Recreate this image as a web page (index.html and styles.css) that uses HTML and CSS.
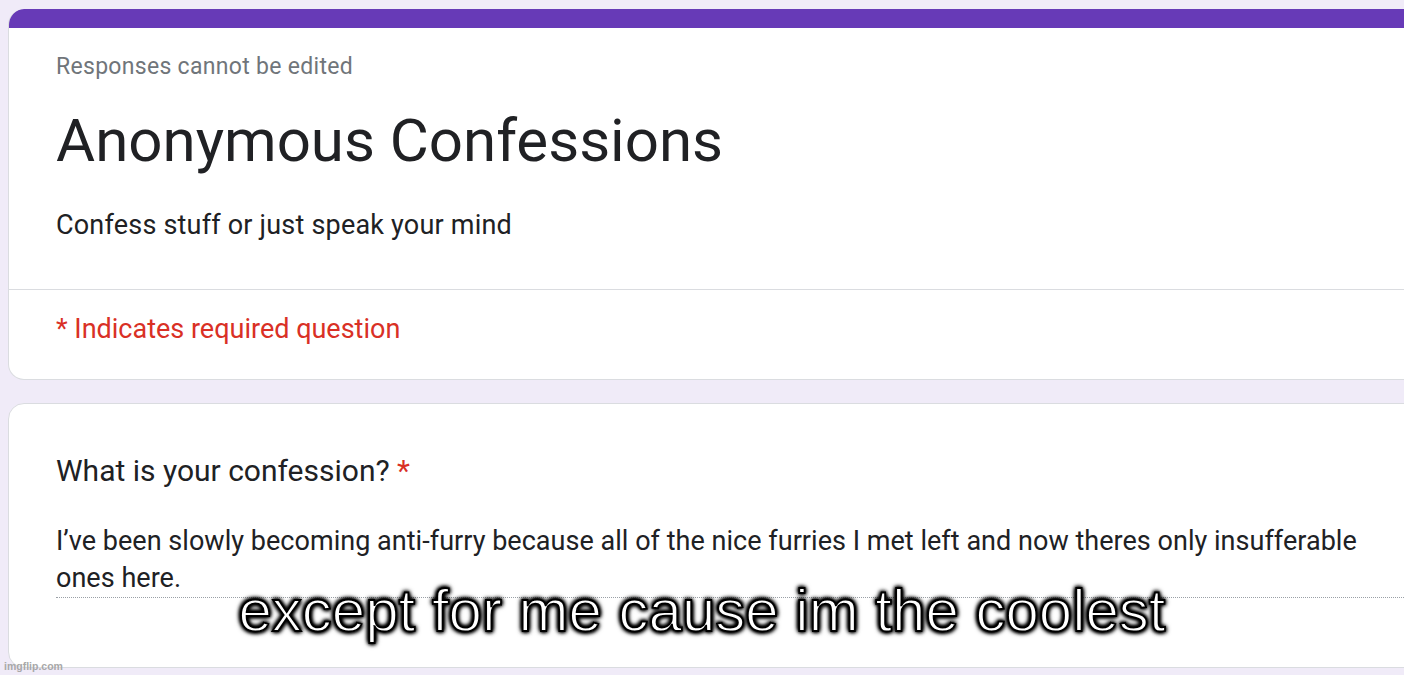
FILE: index.html
```html
<!DOCTYPE html>
<html lang="en">
<head>
<meta charset="utf-8">
<title>Anonymous Confessions</title>
<link rel="stylesheet" href="styles.css">
</head>
<body>
<div class="page">
  <div class="card header-card">
    <div class="accent"></div>
    <div class="header-body">
      <div class="muted">Responses cannot be edited</div>
      <div class="title">Anonymous Confessions</div>
      <div class="desc">Confess stuff or just speak your mind</div>
    </div>
    <div class="divider"></div>
    <div class="required-note">* Indicates required question</div>
  </div>
  <div class="card question-card">
    <div class="question">What is your confession? <span class="star">*</span></div>
    <div class="answer">I’ve been slowly becoming anti-furry because all of the nice furries I met left and now theres only insufferable ones here.</div>
  </div>
</div>
<div class="caption">except for me cause im the coolest</div>
<div class="watermark">imgflip.com</div>
</body>
</html>
```
FILE: styles.css
```css
html, body {
  margin: 0;
  padding: 0;
}
body {
  background: #f0ebf8;
  font-family: Roboto, "Noto Sans", Arial, sans-serif;
  color: #202124;
  overflow: hidden;
  width: 1404px;
  height: 675px;
  position: relative;
}
.page {
  padding: 9px 0 0 8px;
  width: 1460px;
}
.card {
  background: #fff;
  border: 1px solid #dadce0;
  border-radius: 16px;
  box-sizing: border-box;
}
.header-card {
  border-top: none;
  height: 371px;
  overflow: hidden;
}
.accent {
  height: 19px;
  background: #673ab7;
  margin: 0 -1px;
  border-radius: 16px 16px 0 0;
}
.header-body {
  padding: 25px 0 0 47px;
  height: 261px;
  box-sizing: border-box;
}
.muted {
  font-size: 23px;
  line-height: 28px;
  letter-spacing: 0.3px;
  color: #70757a;
}
.title {
  margin-top: 24px;
  font-size: 60px;
  line-height: 72px;
  color: #202124;
}
.desc {
  margin-top: 32px;
  font-size: 27px;
  line-height: 32px;
  letter-spacing: 0.2px;
  color: #202124;
}
.divider {
  height: 1px;
  background: #dadce0;
}
.required-note {
  padding: 23px 0 0 47px;
  font-size: 27px;
  line-height: 32px;
  color: #d93025;
}
.question-card {
  margin-top: 23px;
  height: 265px;
  padding: 49px 0 0 47px;
}
.question {
  font-size: 30px;
  line-height: 36px;
}
.star {
  color: #d93025;
}
.answer {
  margin-top: 34px;
  width: 1330px;
  padding-right: 30px;
  font-size: 27px;
  line-height: 37px;
  letter-spacing: 0.03px;
  color: #202124;
  border-bottom: 1px dotted #9aa0a6;
}
.caption {
  position: absolute;
  left: 0;
  width: 1404px;
  top: 579px;
  text-align: center;
  font-family: "Liberation Sans", Arial, sans-serif;
  font-size: 60px;
  line-height: 64px;
  color: #fff;
  -webkit-text-stroke: 1.8px #000;
  text-shadow: 0 0 3px #000, 0 0 4px #000, 0 0 5px #000, 0 0 6px #000, 1px 1px 4px #000, -1px -1px 4px #000;
}
.watermark {
  position: absolute;
  left: 4px;
  top: 660px;
  font-family: "Liberation Sans", Arial, sans-serif;
  font-size: 10.5px;
  line-height: 13px;
  color: #a8a8a8;
  font-weight: bold;
}
```
